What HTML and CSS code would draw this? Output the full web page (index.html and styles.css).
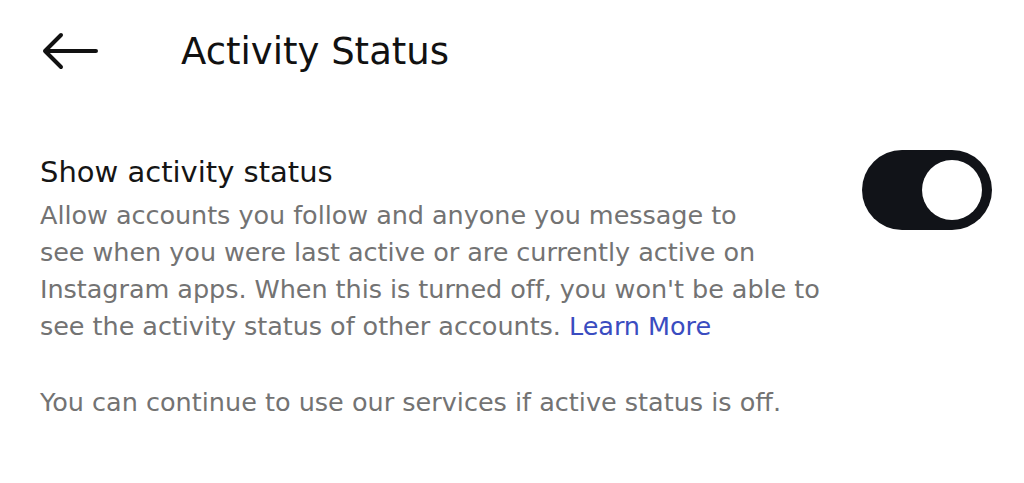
FILE: index.html
```html
<!DOCTYPE html>
<html>
<head>
  <meta charset="utf-8">
  <title>Activity Status</title>
  <link rel="stylesheet" href="styles.css">
</head>
<body>
  <div class="header">
    <svg class="back" width="58" height="40" viewBox="0 0 58 40">
      <path d="M55 20 H4 M20 4 L4 20 L20 36" fill="none" stroke="#111" stroke-width="4" stroke-linecap="round" stroke-linejoin="round"/>
    </svg>
    <h1>Activity Status</h1>
  </div>

  <div class="setting">
    <div class="setting-text">
      <div class="setting-title">Show activity status</div>
      <p class="setting-desc">Allow accounts you follow and anyone you message to<br>see when you were last active or are currently active on<br>Instagram apps. When this is turned off, you won't be able to<br>see the activity status of other accounts. <a href="#" class="learn-more">Learn More</a></p>
    </div>
    <label class="toggle">
      <input type="checkbox" checked>
      <span class="slider"></span>
    </label>
  </div>

  <p class="note">You can continue to use our services if active status is off.</p>
</body>
</html>
```

FILE: styles.css
```css
body {
  margin: 0;
  background: #fff;
  font-family: "DejaVu Sans", sans-serif;
  color: #111;
}

.header {
  display: flex;
  align-items: center;
  height: 102px;
  padding-left: 41px;
}

.back {
  display: block;
}

h1 {
  margin: 0 0 0 82px;
  font-size: 37px;
  font-weight: 400;
  color: #111;
}

.setting {
  display: flex;
  justify-content: space-between;
  align-items: flex-start;
  padding: 50px 32px 0 40px;
}

.setting-title {
  font-size: 29px;
  line-height: 40px;
  color: #151515;
}

.setting-desc {
  margin: 5px 0 0;
  font-size: 25.5px;
  letter-spacing: -0.05px;
  line-height: 37px;
  color: #737373;
  white-space: nowrap;
}

.learn-more {
  color: #3a4cc0;
  text-decoration: none;
}

.toggle {
  position: relative;
  display: inline-block;
  flex-shrink: 0;
  width: 130px;
  height: 80px;
  margin-top: -2px;
}

.toggle input {
  opacity: 0;
  width: 0;
  height: 0;
}

.slider {
  position: absolute;
  top: 0;
  left: 0;
  right: 0;
  bottom: 0;
  background-color: #111318;
  border-radius: 40px;
}

.slider:before {
  position: absolute;
  content: "";
  width: 60px;
  height: 60px;
  left: 10px;
  top: 10px;
  background-color: #fff;
  border-radius: 50%;
}

input:checked + .slider:before {
  transform: translateX(50px);
}

.note {
  margin: 39px 0 0 40px;
  font-size: 25.5px;
  line-height: 37px;
  color: #737373;
}
```
